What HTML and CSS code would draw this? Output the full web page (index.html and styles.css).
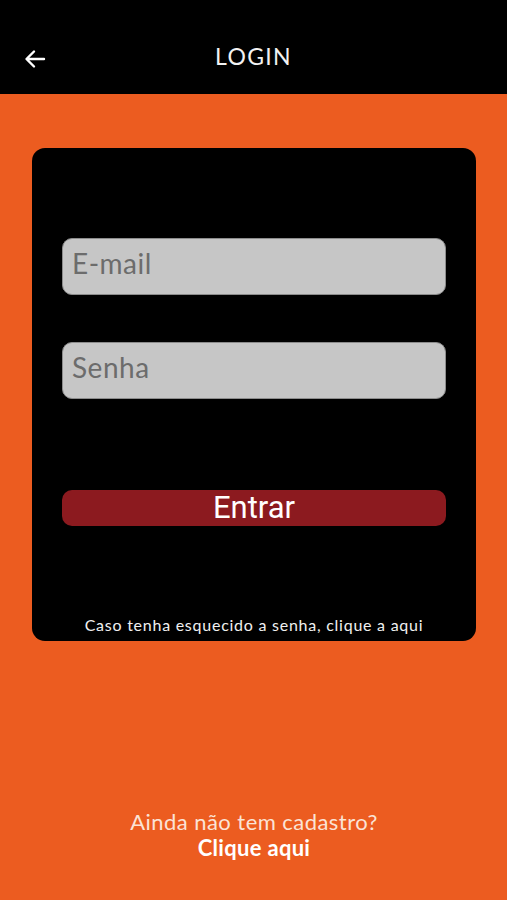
FILE: index.html
```html
<!DOCTYPE html>
<html lang="pt">
<head>
<meta charset="utf-8">
<title>Login</title>
<link rel="stylesheet" href="styles.css">
</head>
<body>
<div class="app">
  <header class="topbar">
    <button class="back" aria-label="Voltar">
      <svg width="22" height="20" viewBox="0 0 22 20" fill="none" stroke="#fff" stroke-width="2.4" stroke-linecap="round" stroke-linejoin="round">
        <path d="M20 10H3M10 2.5L2.5 10L10 17.5"/>
      </svg>
    </button>
    <h1 class="title">LOGIN</h1>
  </header>
  <main class="content">
    <section class="card">
      <div class="field"><span class="placeholder">E-mail</span></div>
      <div class="field field-second"><span class="placeholder">Senha</span></div>
      <button class="btn">Entrar</button>
      <p class="forgot">Caso tenha esquecido a senha, clique a aqui</p>
    </section>
    <footer class="signup">
      <p class="signup-q">Ainda não tem cadastro?</p>
      <p class="signup-link">Clique aqui</p>
    </footer>
  </main>
</div>
</body>
</html>
```
FILE: styles.css
```css
* { box-sizing: border-box; }
html, body { margin: 0; padding: 0; }
body {
  width: 507px;
  height: 900px;
  background: #ec5c20;
  font-family: Lato, "Noto Sans", "Liberation Sans", sans-serif;
  overflow: hidden;
}
.app {
  display: flex;
  flex-direction: column;
  height: 900px;
}
.topbar {
  height: 94px;
  background: #000;
  display: flex;
  align-items: center;
  justify-content: center;
  padding-top: 18px;
  position: relative;
}
.back {
  position: absolute;
  left: 24px;
  top: 49px;
  background: none;
  border: 0;
  padding: 0;
  width: 22px;
  height: 20px;
  display: flex;
}
.title {
  margin: 0;
  color: #f2f2f2;
  font-weight: 400;
  font-size: 23px;
  letter-spacing: 1.3px;
}
.content {
  flex: 1;
  display: flex;
  flex-direction: column;
  padding: 54px 31px 0 32px;
}
.card {
  background: #000;
  border-radius: 13px;
  height: 493px;
  padding: 90px 30px 0 30px;
  display: flex;
  flex-direction: column;
}
.field {
  height: 57px;
  background: #c6c6c6;
  border: 1px solid #8c8c8c;
  border-radius: 10px;
  display: flex;
  align-items: center;
  padding: 0 0 7px 9px;
}
.field-second { margin-top: 47px; }
.placeholder {
  color: #6c6c6c;
  font-size: 28px;
  letter-spacing: 0.5px;
}
.btn {
  margin-top: 91px;
  height: 36px;
  background: #8c1a1f;
  border: 0;
  border-radius: 10px;
  color: #fff;
  font-family: Roboto, "Liberation Sans", sans-serif;
  font-size: 31px;
  line-height: 36px;
  padding: 0 0 2px;
}
.forgot {
  margin: auto 0 7px;
  text-align: center;
  color: #f0f0f0;
  font-size: 16px;
  letter-spacing: 0.75px;
}
.signup {
  margin-top: auto;
  margin-bottom: 39px;
  text-align: center;
  color: #fbe3d6;
}
.signup p { margin: 0; }
.signup-q {
  font-size: 22px;
  line-height: 26px;
  letter-spacing: 0.45px;
}
.signup-link {
  font-size: 22px;
  line-height: 26px;
  font-weight: 700;
  color: #fff;
  letter-spacing: 0.3px;
}
```
